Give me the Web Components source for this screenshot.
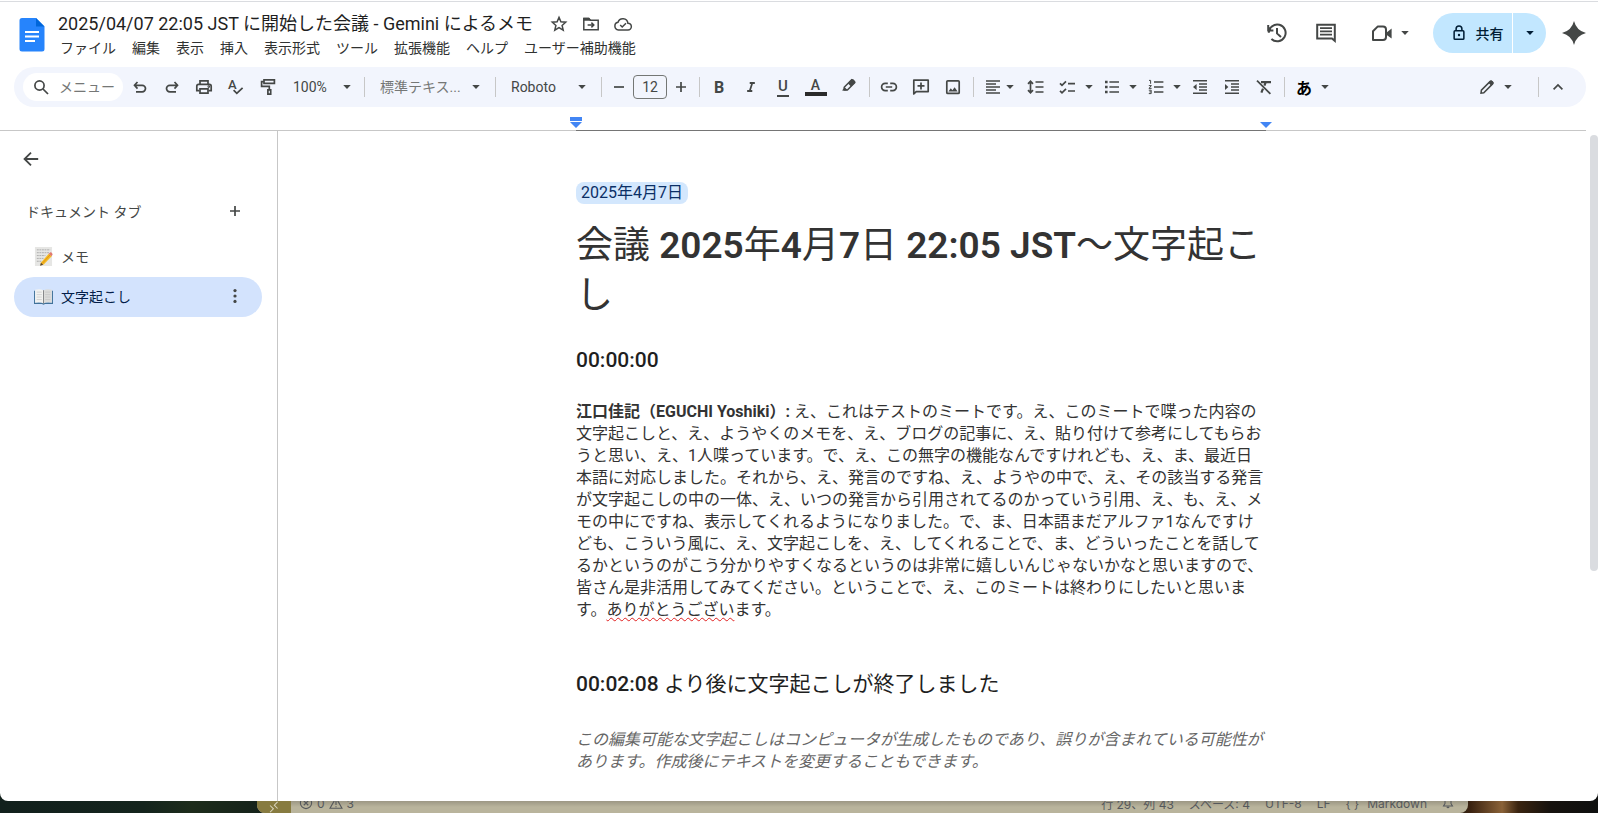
<!DOCTYPE html>
<html lang="ja">
<head>
<meta charset="utf-8">
<meta name="viewport" content="width=device-width, initial-scale=1">
<title>2025/04/07 22:05 JST に開始した会議 - Gemini によるメモ</title>
<style>
  body {
    margin: 0;
    font-family: Roboto, "Noto Sans CJK JP", sans-serif;
    font-size: 14px;
    color: #444746;
  }

  /* Headings set only their digits and Latin text in a heavier weight */
  strong { font-weight: 500; }
  [slot="title"] strong { font-weight: 600; }
</style>
</head>
<body>
<docs-desktop>
  <docs-window>
    <docs-header slot="header"></docs-header>
    <docs-toolbar slot="toolbar"></docs-toolbar>
    <docs-ruler slot="ruler"></docs-ruler>
    <docs-tabs slot="tabs">
      <docs-tab icon="memo">メモ</docs-tab>
      <docs-tab icon="book" selected>文字起こし</docs-tab>
    </docs-tabs>
    <docs-page>
      <docs-chip slot="date">2025年4月7日</docs-chip>
      <span slot="title">会議 <strong>2025</strong>年<strong>4</strong>月<strong>7</strong>日 <strong>22:05 JST</strong>〜文字起こ<br>し</span>
      <docs-entry>
        <strong slot="time">00:00:00</strong>
        <b>江口佳記（EGUCHI Yoshiki）:</b> え、これはテストのミートです。え、このミートで喋った内容の<br>
        文字起こしと、え、ようやくのメモを、え、ブログの記事に、え、貼り付けて参考にしてもらお<br>
        うと思い、え、1人喋っています。で、え、この無字の機能なんですけれども、え、ま、最近日<br>
        本語に対応しました。それから、え、発言のですね、え、ようやの中で、え、その該当する発言<br>
        が文字起こしの中の一体、え、いつの発言から引用されてるのかっていう引用、え、も、え、メ<br>
        モの中にですね、表示してくれるようになりました。で、ま、日本語まだアルファ1なんですけ<br>
        ども、こういう風に、え、文字起こしを、え、してくれることで、ま、どういったことを話して<br>
        るかというのがこう分かりやすくなるというのは非常に嬉しいんじゃないかなと思いますので、<br>
        皆さん是非活用してみてください。ということで、え、このミートは終わりにしたいと思いま<br>
        す。<docs-misspelling>ありがとうござい</docs-misspelling>ます。
      </docs-entry>
      <docs-entry note>
        <span slot="time"><strong>00:02:08</strong> より後に文字起こしが終了しました</span>
        この編集可能な文字起こしはコンピュータが生成したものであり、誤りが含まれている可能性が<br>
        あります。作成後にテキストを変更することもできます。
      </docs-entry>
    </docs-page>
  </docs-window>
  <editor-status slot="behind"></editor-status>
</docs-desktop>

<script>
// All outline icons share a 20x20 grid
const ICONS = {
  search: '<circle cx="8.5" cy="8.5" r="4.6"/><path d="M12 12l5 5"/>',
  undo: '<path d="M7.5 5L4.5 8.3l3 3.3M5 8.3h7.2a3.3 3.3 0 0 1 0 6.6H6"/>',
  redo: '<path d="M12.5 5l3 3.3-3 3.3M15 8.3H7.8a3.3 3.3 0 0 0 0 6.6H14"/>',
  print: '<path d="M6 7.2V3.8h8v3.4M5.4 13.6H2.8V9.2q0-1.8 1.8-1.8h10.8q1.8 0 1.8 1.8v4.4h-2.6"/><path d="M6 11.8h8v4.4H6z"/><circle cx="14.8" cy="9.6" r=".5"/>',
  spell: '<text x="2" y="12" font-size="13" font-weight="500" fill="currentColor" stroke="none">A</text><path d="M7.6 13.2l3.2 3.2 5.8-5.6"/>',
  paint: '<path d="M6 2.8h10.4v3.6H6zM6 4.6H3.6v4.8h7.7v3"/><path d="M9.9 12.8h2.8v4.4H9.9z"/>',
  highlight: '<path d="M5.2 10.2l7.4-7.4 3 3-7.2 7.2H5.2z" stroke-width="1.5"/><path d="M9 6.4l3.6-4q1-.8 2 .2l1.6 1.6q.8.9-.2 1.8L12 9.6zM3 13.6l2.8-3.4 2.4 2.6-.8.8z" fill="currentColor" stroke="none"/>',
  link: '<path d="M8.8 13.6H6.2a3.6 3.6 0 0 1 0-7.2h2.6M11.2 13.6h2.6a3.6 3.6 0 0 0 0-7.2h-2.6M6.8 10h6.4"/>',
  addComment: '<path d="M2.8 17V3.2h14.4v11.4H5.2z" stroke-linejoin="round"/><path d="M10 5.4v7M6.5 8.9h7"/>',
  image: '<rect x="3.8" y="3.8" width="12.4" height="12.6" rx="1"/><path d="M5.4 14.4l2.4-3.2 1.6 2 2.2-2.9 3 4.1z" fill="currentColor" stroke="none"/>',
  align: '<path d="M3 4h14M3 7h10M3 10h14M3 13h10M3 16h14" stroke-width="1.5"/>',
  spacing: '<path d="M9.5 5h8M9.5 10h8M9.5 15h8M4.5 4.4v11.2M2 6.8l2.5-2.6L7 6.8M2 13.2l2.5 2.6L7 13.2"/>',
  checklist: '<path d="M10 6.6h7M10 14h7M2 6.4l2 2 4-4M2 13.8l2 2 4-4"/>',
  bullets: '<path d="M7.4 5H17M7.4 10H17M7.4 15H17"/><path d="M3 5h2.6M3 10h2.6M3 15h2.6" stroke-width="2.6"/>',
  numbers: '<path d="M8 5h9.4M8 10h9.4M8 15h9.4"/><path d="M3 3.4h1.6v3.4M2.8 8.6h2.6L3 11.4h2.6M2.8 13.2h2.4v3.4H2.8M3.4 14.9h1.6" stroke-width="1"/>',
  outdent: '<path d="M3 3.8h14M9 7h8M9 10h8M9 13h8M3 16.2h14" stroke-width="1.5"/><path d="M6.6 7v6L3 10z" fill="currentColor" stroke="none"/>',
  indent: '<path d="M3 3.8h14M9 7h8M9 10h8M9 13h8M3 16.2h14" stroke-width="1.5"/><path d="M3 7v6l3.4-3z" fill="currentColor" stroke="none"/>',
  clear: '<path d="M3 3.6l13.4 13.2"/><path d="M7 5.2h10M11.8 5.2l-1.4 3.4M9 11.6l-1.6 4" stroke-width="2.2"/>',
  italic: '<path d="M8.4 5h6.4M5.2 15h6.4M11.6 5L8.4 15" stroke-width="2.2"/>',
  minus: '<path d="M5 10h10"/>',
  plus: '<path d="M5 10h10M10 5v10"/>',
  pencil: '<path d="M4 16.2l.4-3L13.2 4.4q.8-.7 1.6.1l.8.8q.8.8 0 1.6L6.8 15.8z" stroke-width="1.5"/><path d="M11.4 5.8l2-2q.9-.8 1.8.1l1 1q.8.9 0 1.8l-2 2z" fill="currentColor" stroke="none"/>',
  collapse: '<path d="M5.6 12.4L10 8l4.4 4.4"/>',
  star: '<path d="M10 3.4l1.9 4.4 4.8.4-3.6 3.2 1.1 4.7L10 13.6l-4.2 2.5 1.1-4.7-3.6-3.2 4.8-.4z" stroke-width="1.5"/>',
  move: '<path d="M2.8 15.8V4.4h5l1.6 1.8h7.8v9.6z" stroke-width="1.5"/><path d="M6.6 11h6M10.4 8.6l2.4 2.4-2.4 2.4" stroke-width="1.5"/><path d="M2.4 3.8h5.6l1.6 1.8v1.2H2.4z" fill="currentColor" stroke="none"/>',
  cloud: '<path d="M5.4 16a3.9 3.9 0 0 1-.4-7.7 5.1 5.1 0 0 1 9.9.9A3.4 3.4 0 0 1 15 16z" stroke-width="1.5"/><path d="M7.2 11l2 2 3.8-3.8" stroke-width="1.5"/>',
  history: '<path d="M1.8 9.8A8.4 8.4 0 1 1 4.4 16M1.2 2v5.4h5.2M1.6 7.2A9 9 0 0 1 6 2.8M10 5v5.4l4 3.6" stroke-width="2"/>',
  comment: '<path d="M1.2 1.8h17.6v16L16 15.4H1.2z" stroke-width="2"/><path d="M4 5.2h12M4 8.4h12M4 11.6h12" stroke-width="1.8"/>',
  video: '<path d="M1 17V8.200L5.600 3.600H11q3 0 3 3V14q0 3-3 3z" stroke-width="2" stroke-linejoin="round"/><path d="M14 10l5.600-4.600v10L14 11.400z" fill="currentColor" stroke="none"/>',
  lock: '<rect x="4.6" y="7.6" width="10.8" height="9.4" rx="1"/><path d="M6.8 7.6V5.4a3.2 3.2 0 0 1 6.4 0v2.2"/><circle cx="10" cy="12.2" r="1.3" fill="currentColor" stroke="none"/>',
  sparkle: '<path d="M10 0q2 8 10 10-8 2-10 10-2-8-10-10 8-2 10-10z" fill="currentColor" stroke="none"/>',
  back: '<path d="M18 10H3M10 2.8L2.8 10l7.2 7.2" stroke-width="2"/>',
  more: '<g fill="currentColor" stroke="none"><circle cx="10" cy="4" r="1.8"/><circle cx="10" cy="10" r="1.8"/><circle cx="10" cy="16" r="1.8"/></g>',
  arrow: '<path d="M2.500 6h15L10 14z" fill="currentColor" stroke="none"/>',
  memo: '<g stroke="none"><path d="M1 0h18v20H1z" fill="#e6e6e4"/><path d="M3 3h14M3 6h13M3 9h9M3 12h7M3 15h5" stroke="#9d9d9d" stroke-width=".8" stroke-dasharray="2 .7"/><path d="M7.4 16.2L15.6 7l3 2.8-8.4 8.6-3.6 1.2z" fill="#f5b921"/><path d="M8.8 17.2l8-8.8" stroke="#d88a12" stroke-width=".8"/><path d="M15.4 7.2l1.8-1.6q1.8-.2 2.4 2.2l-1.2 2z" fill="#e07a70"/><path d="M6.4 19.8l.9-3.2 2.4 2z" fill="#584735"/></g>',
  book: '<g stroke="none"><path d="M0 4h1v12.4h18V4h1v13.8h-8.4L10 18.6l-1.6-.8H0z" fill="#40729a"/><path d="M1.2 3Q6.5 1.6 10 3.6v13.8q-3.6-2-8.8-.8z" fill="#f2f2f0"/><path d="M18.8 3Q13.5 1.6 10 3.6v13.8q3.6-2 8.8-.8z" fill="#dcdcda"/><path d="M10 3.4v14" stroke="#6b6b6b" stroke-width=".8"/><path d="M2.8 5.400h5.400M2.800 8h5.400M2.800 10.600h5.400M2.800 13.200h5.400M11.800 5.400h5.400M11.800 8h5.400M11.800 10.600h5.400M11.800 13.200h5.400" stroke="#bbb" stroke-width=".6"/></g>',
  error: '<circle cx="10" cy="10" r="8" stroke-width="1.6"/><path d="M6.8 6.8l6.4 6.4M13.2 6.8l-6.4 6.4" stroke-width="1.6"/>',
  warning: '<path d="M10 2.5L1.5 17.5h17z" stroke-width="1.6"/><path d="M10 7v6M10 14.5V16" stroke-width="1.6"/>',
  remote: '<path d="M3.5 7.5L9 13l-5.5 5.5M16 1.5L10.5 7l5.5 5.5"/>',
  bell: '<path d="M2.5 15h15L15 11V3H5v8zM8 16.500q2 2.500 4 0"/><circle cx="15" cy="3" r="3.500" fill="currentColor" stroke="none"/>'
};

class DocsIcon extends HTMLElement {
  connectedCallback() {
    if (this.shadowRoot) return;
    this.attachShadow({ mode: 'open' });
    const size = this.getAttribute('size') || 20;
    this.shadowRoot.innerHTML = `
      <style>
        :host { display: inline-flex; flex: none; }
        svg { display: block; overflow: visible; }
      </style>
      <svg width="${size}" height="${size}" viewBox="0 0 20 20" fill="none" stroke="currentColor" stroke-width="1.7" aria-hidden="true">${ICONS[this.getAttribute('name')]}</svg>
    `;
  }
}
customElements.define('docs-icon', DocsIcon);

class ToolButton extends HTMLElement {
  connectedCallback() {
    if (this.shadowRoot) return;
    this.attachShadow({ mode: 'open' });
    const icon = this.getAttribute('icon');
    const size = this.getAttribute('size') || 20;
    this.shadowRoot.innerHTML = `
      <style>
        :host { display: block; flex: none; }
        button {
          display: flex;
          align-items: center;
          height: 28px;
          margin: 0;
          padding: 0;
          border: 0;
          border-radius: 4px;
          background: none;
          color: inherit;
          font: inherit;
          cursor: pointer;
        }
        button:hover { background: rgba(68,71,70,0.08); }
        .face {
          display: flex;
          flex-direction: column;
          align-items: center;
          justify-content: center;
          width: var(--face, 32px);
        }
        .arrow { width: 12px; color: #444746; }
        :host([tight]) .arrow { margin: 0 3px 0 -4px; }
      </style>
      <button type="button" aria-label="${this.getAttribute('label')}">
        <span class="face">${icon ? `<docs-icon name="${icon}" size="${size}"></docs-icon>` : '<slot></slot>'}</span>
        ${this.hasAttribute('menu') ? '<docs-icon class="arrow" name="arrow" size="10"></docs-icon>' : ''}
      </button>
    `;
  }
}
customElements.define('tool-button', ToolButton);

class ToolSelect extends HTMLElement {
  connectedCallback() {
    if (this.shadowRoot) return;
    this.attachShadow({ mode: 'open' });
    this.shadowRoot.innerHTML = `
      <style>
        :host { display: grid; align-items: center; flex: none; width: var(--width); }
        select, docs-icon { grid-area: 1 / 1; }
        select {
          appearance: none;
          width: 100%;
          height: 28px;
          margin: 0;
          padding: 0 24px 0 var(--pad, 12px);
          border: 0;
          background: none;
          color: inherit;
          font: inherit;
        }
        docs-icon { justify-self: end; margin-right: var(--end, 10px); color: #444746; pointer-events: none; }
      </style>
      <select aria-label="${this.getAttribute('label')}"><option>${this.getAttribute('value')}</option></select>
      <docs-icon name="arrow" size="10"></docs-icon>
    `;
  }
}
customElements.define('tool-select', ToolSelect);

class DocsHeader extends HTMLElement {
  constructor() {
    super();
    this.attachShadow({ mode: 'open' });
    this.shadowRoot.innerHTML = `
      <style>
        :host {
          display: flex;
          align-items: flex-start;
          padding: 8px 12px 0 19px;
          height: 57px;
        }
        .logo { display: block; margin: 7px 13px 0 0; }
        .titles { flex: 1; }
        .name { display: flex; align-items: center; height: 28px; }
        h1 {
          margin: 0 10px 0 0;
          font-size: 18px;
          font-weight: 400;
          line-height: 28px;
          color: #1f1f1f;
          white-space: nowrap;
        }
        nav { display: flex; gap: 16px; padding-left: 2px; }
        nav button {
          margin: 0;
          padding: 0;
          border: 0;
          background: none;
          color: #303231;
          font: inherit;
          line-height: 20px;
          white-space: nowrap;
        }
        .actions { display: flex; align-items: center; height: 45px; }
        .actions tool-button { --face: 49px; }
        .actions .meet { --face: 36px; margin: 0 21px 0 14px; }
        .share {
          display: flex;
          gap: 1px;
          margin-right: 16px;
          color: #001d35;
        }
        .share button {
          display: flex;
          align-items: center;
          justify-content: center;
          height: 40px;
          margin: 0;
          padding: 0;
          border: 0;
          background: #c2e7ff;
          color: inherit;
          font: inherit;
          font-weight: 500;
        }
        .share .main { gap: 8px; width: 79px; padding-left: 8px; border-radius: 20px 0 0 20px; box-sizing: border-box; }
        .share .more { width: 33px; border-radius: 0 20px 20px 0; }
        .actions .gemini { --face: 24px; }
      </style>
      <svg class="logo" width="26" height="35" viewBox="0 0 26 35" role="img" aria-label="ドキュメント">
        <path d="M3 1h14l8.500 8.500V32a2.500 2.500 0 0 1-2.500 2.500H3A2.500 2.500 0 0 1 .5 32V3.500A2.500 2.500 0 0 1 3 1z" fill="#2684fc"/>
        <path d="M17 1l8.500 8.500H17z" fill="#0066da"/>
        <path d="M6 15h14M6 19.500h14M6 24h10" stroke="#fff" stroke-width="2"/>
      </svg>
      <div class="titles">
        <div class="name">
          <h1>2025/04/07 22:05 JST に開始した会議 - Gemini によるメモ</h1>
          <tool-button icon="star" label="スターを付ける"></tool-button>
          <tool-button icon="move" label="移動"></tool-button>
          <tool-button icon="cloud" label="保存状況"></tool-button>
        </div>
        <nav>
          ${['ファイル', '編集', '表示', '挿入', '表示形式', 'ツール', '拡張機能', 'ヘルプ', 'ユーザー補助機能']
            .map(item => `<button type="button">${item}</button>`).join('')}
        </nav>
      </div>
      <div class="actions">
        <tool-button icon="history" label="変更履歴"></tool-button>
        <tool-button icon="comment" label="コメント"></tool-button>
        <tool-button class="meet" icon="video" menu label="通話"></tool-button>
        <div class="share">
          <button class="main" type="button"><docs-icon name="lock" size="18"></docs-icon>共有</button>
          <button class="more" type="button" aria-label="共有オプション"><docs-icon name="arrow" size="10"></docs-icon></button>
        </div>
        <tool-button class="gemini" icon="sparkle" size="24" label="Gemini"></tool-button>
      </div>
    `;
  }
}
customElements.define('docs-header', DocsHeader);

class DocsToolbar extends HTMLElement {
  constructor() {
    super();
    this.attachShadow({ mode: 'open' });
    this.shadowRoot.innerHTML = `
      <style>
        :host {
          display: flex;
          align-items: center;
          height: 40px;
          margin: 0 12px 0 14px;
          padding: 0 12px 0 9px;
          border-radius: 20px;
          background: #f2f5fd;
        }
        .search {
          display: flex;
          align-items: center;
          gap: 8px;
          width: 100px;
          height: 28px;
          margin-right: 1px;
          padding: 0 8px;
          border-radius: 14px;
          background: #fff;
          box-sizing: border-box;
        }
        input { margin: 0; min-width: 0; border: 0; padding: 0; background: none; font: inherit; color: inherit; }
        .search input { flex: 1; }
        .search input::placeholder { color: #757776; opacity: 1; }
        .size {
          width: 34px;
          height: 24px;
          border: 1px solid #747775;
          border-radius: 4px;
          text-align: center;
          box-sizing: border-box;
        }
        hr { flex: none; width: 1px; height: 20px; margin: 0 3px 0 4px; border: 0; background: #c7c7c7; }
        .zoom { --width: 76px; --pad: 9px; --end: 8px; }
        .style { --width: 123px; color: #757776; }
        .font { --width: 98px; }
        .step { --face: 28px; }
        .color { --face: 33px; }
        .bold { font-size: 16px; font-weight: 700; }
        .underline { font-size: 15px; font-weight: 500; line-height: 17px; }
        .underline span { border-bottom: 2px solid; padding: 0 1px; }
        .text { font-size: 14px; font-weight: 500; line-height: 14px; }
        .text i { width: 22px; height: 4px; background: #2b2b2b; }
        .kana { color: #000; font-size: 16px; font-weight: 700; }
        .spring { flex: 1; }
        .mode { margin-right: 19px; }
      </style>
      <label class="search"><docs-icon name="search"></docs-icon><input type="text" placeholder="メニュー" aria-label="メニュー"></label>
      <tool-button icon="undo" label="元に戻す"></tool-button>
      <tool-button icon="redo" label="やり直し"></tool-button>
      <tool-button icon="print" label="印刷"></tool-button>
      <tool-button icon="spell" label="スペルチェック"></tool-button>
      <tool-button icon="paint" label="書式を貼り付け"></tool-button>
      <tool-select class="zoom" value="100%" label="ズーム"></tool-select>
      <hr>
      <tool-select class="style" value="標準テキス..." label="スタイル"></tool-select>
      <hr>
      <tool-select class="font" value="Roboto" label="フォント"></tool-select>
      <hr>
      <tool-button class="step" icon="minus" label="フォントサイズを縮小"></tool-button>
      <input class="size" type="text" value="12" aria-label="フォントサイズ">
      <tool-button class="step" icon="plus" label="フォントサイズを拡大"></tool-button>
      <hr>
      <tool-button class="bold" label="太字">B</tool-button>
      <tool-button icon="italic" size="16" label="斜体"></tool-button>
      <tool-button class="underline" label="下線"><span>U</span></tool-button>
      <tool-button class="color text" label="テキストの色">A<i></i></tool-button>
      <tool-button class="color" icon="highlight" label="ハイライトの色"></tool-button>
      <hr>
      <tool-button icon="link" label="リンクを挿入"></tool-button>
      <tool-button icon="addComment" label="コメントを追加"></tool-button>
      <tool-button icon="image" label="画像を挿入"></tool-button>
      <hr>
      <tool-button icon="align" menu tight label="配置"></tool-button>
      <tool-button icon="spacing" label="行間隔"></tool-button>
      <tool-button icon="checklist" menu label="チェックリスト"></tool-button>
      <tool-button icon="bullets" menu label="箇条書き"></tool-button>
      <tool-button icon="numbers" menu label="番号付きリスト"></tool-button>
      <tool-button icon="outdent" label="インデント減"></tool-button>
      <tool-button icon="indent" label="インデント増"></tool-button>
      <tool-button icon="clear" label="書式をクリア"></tool-button>
      <hr>
      <tool-button class="kana" menu label="入力ツール">あ</tool-button>
      <div class="spring"></div>
      <tool-button class="mode" icon="pencil" menu label="編集モード"></tool-button>
      <hr>
      <tool-button icon="collapse" label="メニューを隠す"></tool-button>
    `;
  }
}
customElements.define('docs-toolbar', DocsToolbar);

class DocsRuler extends HTMLElement {
  constructor() {
    super();
    this.attachShadow({ mode: 'open' });
    this.shadowRoot.innerHTML = `
      <style>
        :host {
          display: block;
          height: 23px;
          margin-right: 12px;
          padding: 0 22px 0 278px;
          border-bottom: 1px solid #c7c7c7;
        }
        .scale {
          display: flex;
          align-items: flex-end;
          justify-content: space-between;
          max-width: 690px;
          height: 23px;
          margin: 0 auto;
          border-bottom: 1px solid #757575;
        }
        svg { display: block; margin: 0 -6px 2px; }
      </style>
      <div class="scale">
        <svg width="12" height="11" viewBox="0 0 12 11" fill="#4285f4"><path d="M0 0h12v4H0zM0 5h12l-6 6z"/></svg>
        <svg width="12" height="6" viewBox="0 0 12 6" fill="#4285f4"><path d="M0 0h12L6 6z"/></svg>
      </div>
    `;
  }
}
customElements.define('docs-ruler', DocsRuler);

class DocsTab extends HTMLElement {
  connectedCallback() {
    if (this.shadowRoot) return;
    this.attachShadow({ mode: 'open' });
    this.shadowRoot.innerHTML = `
      <style>
        :host {
          display: flex;
          align-items: center;
          height: 40px;
          padding: 0 11px 2px 20px;
          border-radius: 20px;
          box-sizing: border-box;
        }
        :host([selected]) { background: #d3e3fd; color: #041e49; }
        .open {
          display: flex;
          flex: 1;
          align-items: center;
          gap: 8px;
          margin: 0;
          padding: 0;
          border: 0;
          background: none;
          color: inherit;
          font: inherit;
        }
        tool-button { color: #444746; }
      </style>
      <button class="open" type="button"><docs-icon name="${this.getAttribute('icon')}" size="19"></docs-icon><slot></slot></button>
      ${this.hasAttribute('selected') ? '<tool-button icon="more" size="18" label="タブのオプション"></tool-button>' : ''}
    `;
  }
}
customElements.define('docs-tab', DocsTab);

class DocsTabs extends HTMLElement {
  constructor() {
    super();
    this.attachShadow({ mode: 'open' });
    this.shadowRoot.innerHTML = `
      <style>
        :host {
          display: block;
          padding: 14px 15px 0 14px;
          border-right: 1px solid #c7c7c7;
        }
        .head {
          display: flex;
          align-items: center;
          justify-content: space-between;
          height: 48px;
          margin-top: 14px;
          padding: 0 11px 0 12px;
        }
        h2 { margin: 0; font-size: 14px; font-weight: 400; }
        .back { margin-left: 1px; }
        .list { padding-top: 2px; }
      </style>
      <tool-button class="back" icon="back" size="18" label="タブを閉じる"></tool-button>
      <div class="head">
        <h2>ドキュメント タブ</h2>
        <tool-button icon="plus" label="タブを追加"></tool-button>
      </div>
      <div class="list"><slot></slot></div>
    `;
  }
}
customElements.define('docs-tabs', DocsTabs);

class DocsChip extends HTMLElement {
  constructor() {
    super();
    this.attachShadow({ mode: 'open' });
    this.shadowRoot.innerHTML = `
      <style>
        :host {
          display: inline-block;
          padding: 0 5px;
          border-radius: 8px;
          background: #d3e7fd;
          color: #0b2f66;
          font-size: 16px;
          line-height: 22px;
        }
      </style>
      <slot></slot>
    `;
  }
}
customElements.define('docs-chip', DocsChip);

class DocsMisspelling extends HTMLElement {
  constructor() {
    super();
    this.attachShadow({ mode: 'open' });
    // inline text: no white space around the slot
    this.shadowRoot.innerHTML = `<style>
        :host { text-decoration: underline wavy #e02020 1px; text-underline-offset: 2px; text-decoration-skip-ink: none; }
      </style><slot></slot>`;
  }
}
customElements.define('docs-misspelling', DocsMisspelling);

class DocsEntry extends HTMLElement {
  constructor() {
    super();
    this.attachShadow({ mode: 'open' });
    this.shadowRoot.innerHTML = `
      <style>
        :host { display: block; margin-top: 24px; }
        :host([note]) { margin-top: 48px; }
        h2 {
          margin: 0;
          font-size: 21px;
          font-weight: 400;
          line-height: 30px;
          color: #1f1f1f;
        }
        p { margin: 26px 0 0; font-size: 16px; line-height: 22px; white-space: nowrap; }
        :host([note]) p { margin-top: 30px; color: #666; font-style: italic; }
      </style>
      <h2><slot name="time"></slot></h2>
      <p><slot></slot></p>
    `;
  }
}
customElements.define('docs-entry', DocsEntry);

class DocsPage extends HTMLElement {
  constructor() {
    super();
    this.attachShadow({ mode: 'open' });
    this.shadowRoot.innerHTML = `
      <style>
        :host { display: flex; color: #333; overflow: hidden; }
        .scroll { flex: 1; min-width: 0; padding: 51px 26px 0 0; }
        article { max-width: 690px; margin: 0 auto; }
        .date { height: 22px; }
        h1 {
          margin: 17px 0 0;
          font-size: 37px;
          font-weight: 400;
          line-height: 50px;
          white-space: nowrap;
        }
        .thumb {
          width: 8px;
          height: 65%;
          margin-top: 4px;
          border-radius: 4px;
          background: #dadce0;
        }
      </style>
      <div class="scroll">
        <article>
          <div class="date"><slot name="date"></slot></div>
          <h1><slot name="title"></slot></h1>
          <slot></slot>
        </article>
      </div>
      <div class="thumb"></div>
    `;
  }
}
customElements.define('docs-page', DocsPage);

class DocsWindow extends HTMLElement {
  constructor() {
    super();
    this.attachShadow({ mode: 'open' });
    this.shadowRoot.innerHTML = `
      <style>
        :host {
          display: flex;
          flex-direction: column;
          flex: 1;
          min-height: 0;
          padding-top: 1px;
          border-radius: 0 0 8px 8px;
          background: #fff;
          overflow: hidden;
        }
        .top { border-top: 1px solid #dadce0; }
        .main {
          display: grid;
          grid-template-columns: 278px 1fr;
          flex: 1;
          min-height: 0;
        }
      </style>
      <div class="top">
        <slot name="header"></slot>
        <slot name="toolbar"></slot>
        <slot name="ruler"></slot>
      </div>
      <div class="main">
        <slot name="tabs"></slot>
        <slot></slot>
      </div>
    `;
  }
}
customElements.define('docs-window', DocsWindow);

class EditorStatus extends HTMLElement {
  constructor() {
    super();
    this.attachShadow({ mode: 'open' });
    this.shadowRoot.innerHTML = `
      <style>
        :host {
          display: flex;
          align-items: flex-end;
          height: 12px;
          margin: 0 130px 0 257px;
          border-radius: 0 0 8px 8px;
          background: linear-gradient(#9c9784, #b9b49c 50%);
          color: #55585c;
          font-family: Inter, "Noto Sans CJK JP", sans-serif;
          font-size: 12px;
          overflow: hidden;
        }
        .remote {
          display: flex;
          align-items: flex-end;
          justify-content: center;
          width: 34px;
          height: 12px;
          background: #877b40;
          color: #d8d4bc;
        }
        .left, .right { display: flex; align-items: center; height: 20px; white-space: nowrap; }
        .left { gap: 4px; padding-left: 8px; flex: 1; }
        .right { gap: 15px; padding-right: 14px; }
        .lang { display: flex; gap: 8px; }
      </style>
      <div class="remote"><docs-icon name="remote" size="12"></docs-icon></div>
      <div class="left"><docs-icon name="error" size="14"></docs-icon>0 <docs-icon name="warning" size="14"></docs-icon>3</div>
      <div class="right">
        <span>行 29、列 43</span><span>スペース: 4</span><span>UTF-8</span><span>LF</span>
        <span class="lang"><span>{ }</span><span>Markdown</span></span>
        <docs-icon name="bell" size="12"></docs-icon>
      </div>
    `;
  }
}
customElements.define('editor-status', EditorStatus);

class DocsDesktop extends HTMLElement {
  constructor() {
    super();
    this.attachShadow({ mode: 'open' });
    this.shadowRoot.innerHTML = `
      <style>
        :host {
          display: flex;
          flex-direction: column;
          height: 100vh;
          background: linear-gradient(90deg, #12201c, #14241d 9%, #1d2c1b 12%, #14211b 17%, #14211b 90%, #3a2210 92%, #8a6238 94%, #3a2410 95%, #16120e 97%, #0e0f0f);
          overflow: hidden;
        }
      </style>
      <slot></slot>
      <slot name="behind"></slot>
    `;
  }
}
customElements.define('docs-desktop', DocsDesktop);
</script>
</body>
</html>
